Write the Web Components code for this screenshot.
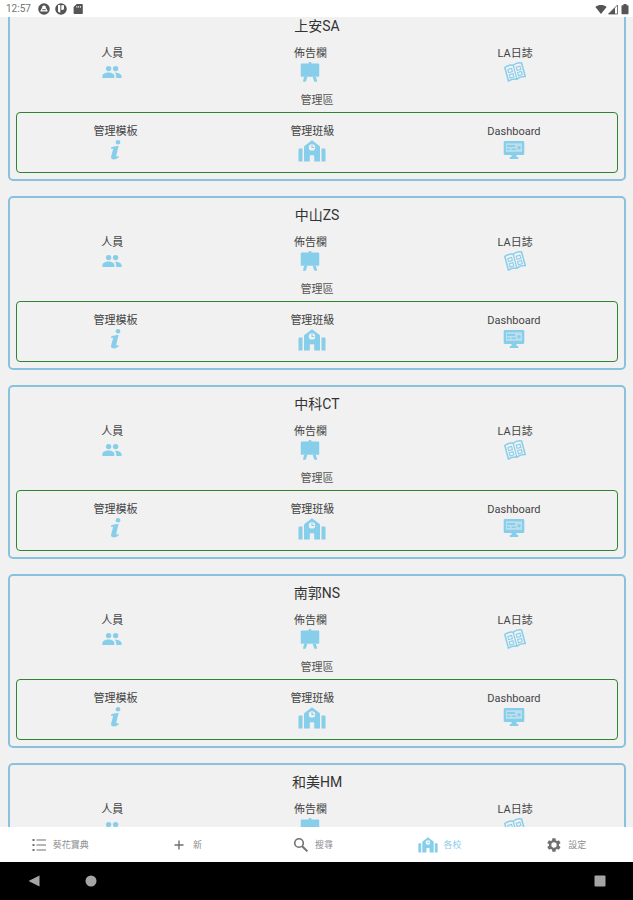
<!DOCTYPE html>
<html lang="zh-Hant">
<head>
<meta charset="utf-8">
<meta name="viewport" content="width=device-width, initial-scale=1">
<title>各校</title>
<style>
  body {
    margin: 0;
    font-family: Roboto, "Noto Sans CJK TC", sans-serif;
    --sky: #87ceeb;
    --sky-line: #8ac2de;
    --green-line: #2f852f;
    --page: #f1f1f1;
  }
</style>
</head>
<body>
<school-app></school-app>

<script>
const ICONS = {
  people: ['0 0 20 20', `
    <circle cx="6.6" cy="6.6" r="2.7"/><circle cx="13.6" cy="6.6" r="2.7"/>
    <path d="M.4 16v-1.800c0-2.300 3-3.600 6-3.600s6 1.300 6 3.600V16z"/>
    <path d="M13.400 10.700c3 0 6.200 1.200 6.200 3.500V16h-5.400v-1.800c0-1.400-.6-2.500-1.600-3.400z"/>`],
  easel: ['0 0 20 21', `
    <rect x="8.500" y="0" width="3" height="3" rx="1"/>
    <rect x=".3" y="1.600" width="19.400" height="14" rx="1"/>
    <path d="M3.800 15.500h3.400l-1.600 5.300H2.600zM12.800 15.500h3.400l1.400 5.300h-3z"/>`],
  book: ['0 0 22 20', `
    <g transform="rotate(-15 11 10)" fill="none" stroke="currentColor" stroke-width="1.500">
      <path d="M2.300 3c3-1.400 5.700-1.400 8.700 0 3-1.400 5.700-1.400 8.700 0v14c-3-1-5.700-1-8.700.4-3-1.400-5.700-1.400-8.700-.4z"/>
      <path d="M11 3v14.400" stroke-width="1.200"/>
      <path d="M4.700 5.700h3.900v3.300H4.700zM4.700 11.200h3.900v3.300H4.700zM13.400 5.700h3.900v3.300h-3.900zM13.400 11.200h3.900v3.300h-3.900z" stroke-width="1.100"/>
    </g>`],
  info: ['0 0 12 20', `
    <circle cx="9" cy="2.300" r="2.300"/>
    <path d="M2.200 7.400c2-.8 4.800-1.400 7.400-1.400L7.300 15.600c-.3 1.200.6 1.200 2.600.3l-.3 1.500c-1.500 1.300-3.500 2-5 2-2.100 0-2.900-1-2.500-2.800L4.200 8.800l-2.300.1z"/>`],
  school: ['0 0 28 22', `
    <path d="M1.500 8.500h3v13H.5v-12a1 1 0 0 1 1-1zM23.500 8.500h3a1 1 0 0 1 1 1v12h-4z"/>
    <path fill-rule="evenodd" d="M14 .3l7.300 5.400c.4.300.7.800.7 1.300v14.500h-5.800V16a.8.8 0 0 0-.8-.8h-2.800a.8.8 0 0 0-.8.800v5.500H6V7c0-.5.300-1 .7-1.300zM14 4.200a3.200 3.200 0 1 0 0 6.400 3.200 3.200 0 0 0 0-6.400z"/>
    <path d="M13.500 5.100h1v2h1.700v1h-2.700z"/>`],
  monitor: ['0 0 22 20', `
    <path fill-rule="evenodd" d="M2 1h18a1.300 1.300 0 0 1 1.300 1.300v11.400A1.300 1.300 0 0 1 20 15h-6.500v2h1.700v2H6.800v-2h1.700v-2H2a1.300 1.300 0 0 1-1.300-1.300V2.300A1.300 1.300 0 0 1 2 1zM3 3.400v8h16v-8z"/>
    <rect x="3" y="3.400" width="16" height="8" opacity=".5"/>
    <path d="M4 5h8v2H4zM4 8.400h3v1.500H4zM8.500 8.400H13v1.500H8.500z"/><circle cx="16" cy="7.800" r="1.800"/>`],
  list: ['0 0 16 16', `
    <path d="M1.500 2h2v2h-2zM1.500 7h2v2h-2zM1.500 12h2v2h-2zM5.500 2.500h9.500v1H5.500zM5.500 7.500h9.500v1H5.500zM5.500 12.500h9.500v1H5.500z"/>`],
  plus: ['0 0 16 16', `<path d="M7.300 3.500h1.400v3.800h3.800v1.400H8.700v3.800H7.300V8.700H3.500V7.300h3.800z"/>`],
  search: ['0 0 16 16', `
    <g fill="none" stroke="currentColor" stroke-width="1.600"><circle cx="6" cy="6" r="4.300"/><path d="M9.200 9.200l5.200 5.200" stroke-width="2"/></g>`],
  gear: ['0 0 24 24', `
    <path d="M19.400 13a7.500 7.500 0 0 0 0-2l2.100-1.600c.2-.2.300-.4.100-.7l-2-3.400c-.1-.2-.4-.3-.6-.2l-2.500 1a7.300 7.300 0 0 0-1.700-1l-.4-2.600a.5.5 0 0 0-.5-.5h-4a.5.5 0 0 0-.5.500L9 5.100a7.700 7.700 0 0 0-1.700 1l-2.500-1c-.2-.1-.5 0-.6.200l-2 3.400c-.1.200-.1.500.1.700L4.500 11a7.500 7.500 0 0 0 0 2l-2.200 1.600c-.2.200-.2.400-.1.700l2 3.400c.1.200.4.300.6.200l2.500-1a7.300 7.300 0 0 0 1.700 1l.4 2.600c0 .300.3.500.5.500h4c.3 0 .5-.2.500-.5l.4-2.600a7.700 7.700 0 0 0 1.700-1l2.500 1c.2.100.5 0 .6-.2l2-3.400c.1-.2.100-.5-.1-.7zM12 16a4 4 0 1 1 0-8 4 4 0 0 1 0 8z"/>`],
  agent: ['0 0 12 12', `
    <path fill-rule="evenodd" d="M6 .2a5.800 5.800 0 1 0 0 11.600A5.800 5.800 0 0 0 6 .2zM6 2.600a1.900 1.900 0 0 1 1.900 2.200L9.500 7.400v1H2.500v-1L4.100 4.800A1.900 1.900 0 0 1 6 2.600z"/>
    <path d="M4.300 6.200h3.400v1H4.300z"/>`],
  pocket: ['0 0 12 12', `
    <path fill-rule="evenodd" d="M6 .2a5.800 5.800 0 1 0 0 11.600A5.800 5.800 0 0 0 6 .2zM3 2h2.300v7.800A4.300 4.300 0 0 1 3 8.500zM6.300 2.200H9v3.600a2 2 0 0 1-2.700 1z"/>`],
  sdcard: ['0 0 12 12', `
    <path fill-rule="evenodd" d="M4.700 1H10a.8.8 0 0 1 .8.800v8.400a.8.800 0 0 1-.8.800H2.400a.8.800 0 0 1-.8-.8V4zM4.500 3v1.800h.8V3zM6.300 3v1.800h.8V3zM8.100 3v1.800h.8V3z"/>`],
  wifi: ['0 0 12 12', `<path d="M6 11L.4 3.900C3.500 1.400 8.500 1.400 11.600 3.900z"/>`],
  signal: ['0 0 12 12', `
    <path d="M10.500 2v9h-9z" fill="none" stroke="currentColor" stroke-width=".8"/><path d="M8 4.500V11H1.500z"/>`],
  battery: ['0 0 12 12', `<path d="M4.500 1h3v1.200h1.300c.4 0 .7.300.7.700v7.600c0 .4-.3.700-.7.700H3.200a.7.700 0 0 1-.7-.7V2.900c0-.4.300-.7.700-.7h1.300z"/>`],
  back: ['0 0 12 12', `<path d="M11.500.5v11L.5 6z"/>`],
  home: ['0 0 12 12', `<circle cx="6" cy="6" r="5.500"/>`],
  recent: ['0 0 12 12', `<rect x=".5" y=".5" width="11" height="11" rx="1"/>`]
};

class AppIcon extends HTMLElement {
  constructor() {
    super();
    this.attachShadow({ mode: 'open' });
  }

  connectedCallback() {
    const [box, shapes] = ICONS[this.getAttribute('name')];
    this.shadowRoot.innerHTML = `
      <style>
        :host {
          display: block;
          flex-shrink: 0;
        }
        svg {
          display: block;
          width: 100%;
          height: 100%;
          fill: currentColor;
        }
      </style>
      <svg viewBox="${box}" aria-hidden="true">${shapes}</svg>
    `;
  }
}

customElements.define('app-icon', AppIcon);

class StatusBar extends HTMLElement {
  constructor() {
    super();

    this.attachShadow({ mode: 'open' });

    this.shadowRoot.innerHTML = `
      <style>
        :host {
          display: flex;
          justify-content: space-between;
          align-items: center;
          height: 17px;
          padding: 0 2px 0 6px;
          background: #fff;
          color: #555;
          font-size: 10px;
        }
        div {
          display: flex;
          align-items: center;
        }
        .left {
          gap: 5px;
        }
        time {
          color: #757575;
          margin-right: 2px;
        }
        app-icon {
          width: 12px;
          height: 12px;
        }
      </style>
      <div class="left">
        <time>12:57</time>
        <app-icon name="agent"></app-icon>
        <app-icon name="pocket"></app-icon>
        <app-icon name="sdcard"></app-icon>
      </div>
      <div>
        <app-icon name="wifi"></app-icon>
        <app-icon name="signal"></app-icon>
        <app-icon name="battery"></app-icon>
      </div>
    `;
  }
}

customElements.define('status-bar', StatusBar);

class IconAction extends HTMLElement {
  constructor() {
    super();
    this.attachShadow({ mode: 'open' });
  }

  connectedCallback() {
    this.shadowRoot.innerHTML = `
      <style>
        :host {
          display: block;
        }
        button {
          display: flex;
          flex-direction: column;
          align-items: center;
          padding: 0;
          border: 0;
          background: none;
          color: #444;
          font: inherit;
          font-size: 11px;
          line-height: 16px;
        }
        app-icon {
          width: 22px;
          height: 20px;
          color: var(--sky);
        }
        app-icon[name="school"] {
          width: 28px;
          height: 22px;
        }
      </style>
      <button type="button">
        <slot></slot>
        <app-icon name="${this.getAttribute('icon')}"></app-icon>
      </button>
    `;
  }
}

customElements.define('icon-action', IconAction);

class SchoolCard extends HTMLElement {
  constructor() {
    super();
    this.attachShadow({ mode: 'open' });
  }

  connectedCallback() {
    // the admin area is only for the schools the user manages
    const admin = this.hasAttribute('admin') ? `
      <h3>管理區</h3>
      <div class="row admin">
        <icon-action icon="info">管理模板</icon-action>
        <icon-action icon="school">管理班級</icon-action>
        <icon-action icon="monitor">Dashboard</icon-action>
      </div>
    ` : '';

    this.shadowRoot.innerHTML = `
      <style>
        :host {
          display: block;
          padding: 7px 6px 6px;
          border: 2px solid var(--sky-line);
          border-radius: 5px;
        }
        h2, h3 {
          margin: 0;
          font-weight: 400;
          text-align: center;
        }
        h2 {
          margin-bottom: 10px;
          font-size: 14px;
          line-height: 20px;
          color: #333;
        }
        h3 {
          margin: 11px 0 3px;
          font-size: 11px;
          line-height: 16px;
          color: #555;
        }
        .row {
          display: flex;
          justify-content: space-around;
        }
        .admin {
          padding: 11px 0 10px;
          border: 1px solid var(--green-line);
          border-radius: 4px;
        }
      </style>
      <h2><slot></slot></h2>
      <div class="row">
        <icon-action icon="people">人員</icon-action>
        <icon-action icon="easel">佈告欄</icon-action>
        <icon-action icon="book">LA日誌</icon-action>
      </div>
      ${admin}
    `;
  }
}

customElements.define('school-card', SchoolCard);

class TabItem extends HTMLElement {
  constructor() {
    super();
    this.attachShadow({ mode: 'open' });
  }

  connectedCallback() {
    this.shadowRoot.innerHTML = `
      <style>
        :host {
          display: flex;
          flex: 1;
          color: #8e8e8f;
          --glyph: #707070;
        }
        :host([active]) {
          color: var(--sky);
          --glyph: var(--sky);
        }
        button {
          flex: 1;
          display: flex;
          align-items: center;
          justify-content: center;
          gap: 6px;
          padding: 0 7px 0 0;
          border: 0;
          background: none;
          color: inherit;
          font: inherit;
          font-size: 9px;
        }
        app-icon {
          width: 16px;
          height: 16px;
          color: var(--glyph);
        }
        app-icon[name="school"] {
          width: 20px;
        }
      </style>
      <button type="button">
        <app-icon name="${this.getAttribute('icon')}"></app-icon>
        <slot></slot>
      </button>
    `;
  }
}

customElements.define('tab-item', TabItem);

class TabBar extends HTMLElement {
  constructor() {
    super();

    this.attachShadow({ mode: 'open' });

    this.shadowRoot.innerHTML = `
      <style>
        :host {
          display: block;
          background: #fff;
        }
        nav {
          display: flex;
          height: 35px;
        }
      </style>
      <nav><slot></slot></nav>
    `;
  }
}

customElements.define('tab-bar', TabBar);

class SystemNav extends HTMLElement {
  constructor() {
    super();

    this.attachShadow({ mode: 'open' });

    this.shadowRoot.innerHTML = `
      <style>
        :host {
          display: flex;
          align-items: center;
          gap: 45px;
          height: 38px;
          padding: 0 27px 0 28px;
          background: #000;
        }
        button {
          padding: 0;
          border: 0;
          background: none;
          color: #a5a5a5;
        }
        button:last-child {
          margin-left: auto;
        }
        app-icon {
          width: 12px;
          height: 12px;
        }
      </style>
      <button type="button" aria-label="返回"><app-icon name="back"></app-icon></button>
      <button type="button" aria-label="主畫面"><app-icon name="home"></app-icon></button>
      <button type="button" aria-label="最近"><app-icon name="recent"></app-icon></button>
    `;
  }
}

customElements.define('system-nav', SystemNav);

class SchoolApp extends HTMLElement {
  constructor() {
    super();

    this.attachShadow({ mode: 'open' });

    this.shadowRoot.innerHTML = `
      <style>
        :host {
          display: flex;
          flex-direction: column;
          height: 100vh;
          background: var(--page);
        }
        main {
          flex: 1;
          min-height: 0;
          overflow-y: auto;
          scrollbar-width: none;
        }
        .cards {
          display: flex;
          flex-direction: column;
          gap: 15px;
          padding: 15px 7px 15px 8px;
        }
      </style>
      <status-bar></status-bar>
      <main>
        <div class="cards">
          <school-card admin>上安SA</school-card>
          <school-card admin>中山ZS</school-card>
          <school-card admin>中科CT</school-card>
          <school-card admin>南郭NS</school-card>
          <school-card>和美HM</school-card>
        </div>
      </main>
      <tab-bar>
        <tab-item icon="list">葵花寶典</tab-item>
        <tab-item icon="plus">新</tab-item>
        <tab-item icon="search">搜尋</tab-item>
        <tab-item icon="school" active>各校</tab-item>
        <tab-item icon="gear">設定</tab-item>
      </tab-bar>
      <system-nav></system-nav>
    `;
  }

  connectedCallback() {
    // open with the list already a little way down
    this.shadowRoot.querySelector('main').scrollTop = 25;
  }
}

customElements.define('school-app', SchoolApp);
</script>
</body>
</html>
